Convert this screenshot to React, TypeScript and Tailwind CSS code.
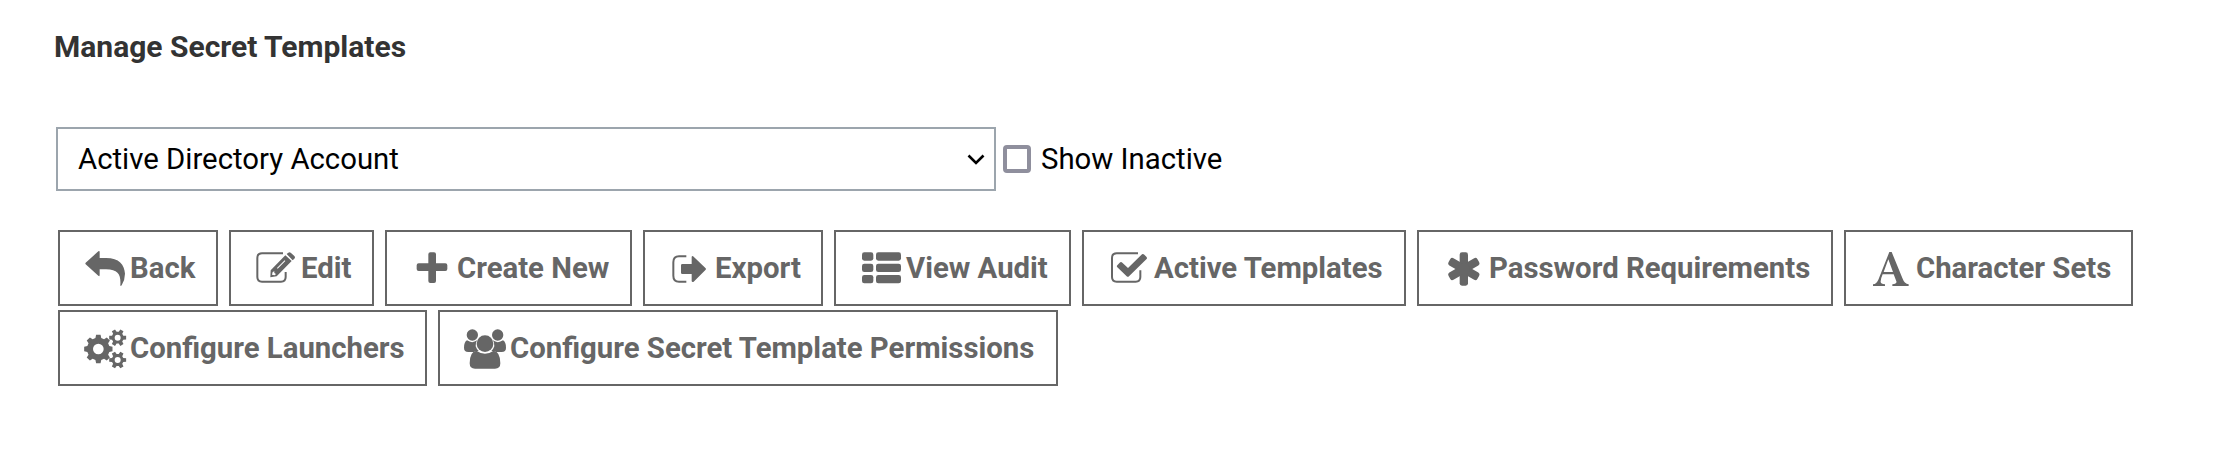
import type { ReactNode } from "react";

function gear(cx: number, cy: number, body: number, tip: number, teeth: number) {
  const step = (Math.PI * 2) / teeth;
  const points: string[] = [];
  for (let i = 0; i < teeth; i++) {
    const a = i * step;
    for (const [r, o] of [[body, -0.33], [tip, -0.2], [tip, 0.2], [body, 0.33]]) {
      points.push(`${(cx + r * Math.cos(a + o * step)).toFixed(1)} ${(cy + r * Math.sin(a + o * step)).toFixed(1)}`);
    }
  }
  return `M${points.join("L")}Z`;
}

function ring(cx: number, cy: number, r: number) {
  return `M${cx - r} ${cy}a${r} ${r} 0 1 0 ${2 * r} 0a${r} ${r} 0 1 0 ${-2 * r} 0Z`;
}

function Icon({ children }: { children: ReactNode }) {
  return (
    <svg viewBox="0 0 153 144" className="h-[48px] w-[51px] shrink-0" fill="currentColor" aria-hidden="true">
      {children}
    </svg>
  );
}

const BackIcon = () => (
  <Icon>
    <path d="M23 56L61 22Q65 19 65 25V42H84C124 42 139 62 141 89Q141 107 131 124Q127 128 127 123C129 94 122 76 84 76H65V92Q65 99 61 95L23 61Q21 59 23 56Z" />
  </Icon>
);

const EditIcon = () => (
  <Icon>
    <path d="M102 28H39Q25 28 25 42V99Q25 113 39 113H96Q110 113 110 99V84" fill="none" stroke="currentColor" strokeWidth="6" />
    <path fillRule="evenodd" d="M65 79L109 34L128 51L83 97L64 100ZM71 84L69 92L77 94L81 90L76 87V82ZM84 72L107 49L109 51L86 74Z" />
    <path d="M113 30L118 26Q122 23 126 27L136 36Q140 40 136 44L131 49Z" />
  </Icon>
);

const PlusIcon = () => (
  <Icon>
    <path d="M76 25H87Q93 25 93 31V58H121Q127 58 127 64V75Q127 81 121 81H93V111Q93 117 87 117H76Q70 117 70 111V81H41Q35 81 35 75V64Q35 58 41 58H70V31Q70 25 76 25Z" />
  </Icon>
);

const ExportIcon = () => (
  <Icon>
    <path d="M70 37H48Q31 37 31 55V95Q31 113 48 113H70" fill="none" stroke="currentColor" strokeWidth="6" />
    <path d="M58 60H86V38Q88 34 92 38L128 73Q130 75 128 77L92 113Q88 116 86 112V90H58Q54 90 54 86V64Q54 60 58 60Z" />
  </Icon>
);

const ListIcon = () => (
  <Icon>
    {[25, 59, 93].map((y) => (
      <g key={y}>
        <rect x="24" y={y} width="34" height="25" rx="7" />
        <rect x="66" y={y} width="75" height="25" rx="7" />
      </g>
    ))}
  </Icon>
);

const CheckIcon = () => (
  <Icon>
    <path d="M108 28H44Q30 28 30 42V99Q30 113 44 113H101Q115 113 115 99V79" fill="none" stroke="currentColor" strokeWidth="6" />
    <path d="M46 64L53 56Q57 52 61 56L78 72L120 31Q123 28 127 32L133 38Q137 42 133 46L81 97Q78 100 74 97L46 70Q43 67 46 64Z" />
  </Icon>
);

const AsteriskIcon = () => (
  <Icon>
    {[0, 60, 120].map((angle) => (
      <rect key={angle} x="68" y="25" width="25" height="100" rx="7" transform={`rotate(${angle} 80.5 75)`} />
    ))}
    <circle cx="80.5" cy="75" r="18" />
  </Icon>
);

const LetterIcon = () => (
  <Icon>
    <path fillRule="evenodd" d="M76 24H83L115 102Q121 119 134 121V126H85V121Q100 119 97 112L89 91H56Q51 102 50 112Q49 119 63 121V126H27V121Q38 119 43 107ZM73 46L59 84H87Z" />
  </Icon>
);

const GearsIcon = () => (
  <Icon>
    <path fillRule="evenodd" d={gear(61, 75, 34, 43, 8) + ring(61, 75, 16)} />
    <path fillRule="evenodd" d={gear(119, 41, 18, 26, 6) + ring(119, 41, 9)} />
    <path fillRule="evenodd" d={gear(119, 108, 18, 26, 6) + ring(119, 108, 9)} />
  </Icon>
);

const PeopleIcon = () => (
  <Icon>
    <circle cx="43" cy="33" r="17" />
    <circle cx="119" cy="33" r="17" />
    <path d="M27 49Q43 60 57 49Q52 59 53 67Q56 76 62 81Q54 81 47 84H31Q18 84 18 71Q18 54 27 49Z" />
    <path d="M135 49Q119 60 105 49Q110 59 109 67Q106 76 100 81Q108 81 115 84H131Q144 84 144 71Q144 54 135 49Z" />
    <circle cx="81" cy="59" r="25" />
    <path d="M55 80Q81 98 107 80Q127 83 127 118Q127 134 111 134H51Q35 134 35 118Q35 83 55 80Z" />
  </Icon>
);

const rows = [
  [
    { label: "Back", icon: <BackIcon />, width: "w-[160px]" },
    { label: "Edit", icon: <EditIcon />, width: "w-[145px]" },
    { label: "Create New", icon: <PlusIcon />, width: "w-[247px]" },
    { label: "Export", icon: <ExportIcon />, width: "w-[180px]" },
    { label: "View Audit", icon: <ListIcon />, width: "w-[237px]" },
    { label: "Active Templates", icon: <CheckIcon />, width: "w-[324px]" },
    { label: "Password Requirements", icon: <AsteriskIcon />, width: "w-[416px]" },
    { label: "Character Sets", icon: <LetterIcon />, width: "w-[289px]" },
  ],
  [
    { label: "Configure Launchers", icon: <GearsIcon />, width: "w-[369px]" },
    { label: "Configure Secret Template Permissions", icon: <PeopleIcon />, width: "w-[620px]" },
  ],
];

export default function App() {
  return (
    <main className="h-[452px] w-[2226px] bg-white pl-[54px] pt-[24px] font-[Roboto,sans-serif] text-[29.33px] leading-[46px] text-black">
      <h1 className="text-[30px] leading-[46px] font-bold text-[#333333]">Manage Secret Templates</h1>
      <div className="mt-[57px] flex h-[64px] items-center pl-[2px]">
        <button className="flex h-[64px] w-[940px] items-center justify-between border-2 border-[#9ca5ad] pl-[20px] pr-[8px]">
          <span>Active Directory Account</span>
          <svg viewBox="0 0 20 12" className="mt-[1px] h-[12px] w-[20px]" fill="none" stroke="currentColor" strokeWidth="2.6" aria-hidden="true">
            <path d="M2.5 1.5L10 9L17.5 1.5" />
          </svg>
        </button>
        <label className="flex items-center">
          <span className="ml-[7px] size-[28px] rounded-[4px] border-4 border-[#8f8f9d]" />
          <span className="ml-[10px]">Show Inactive</span>
        </label>
      </div>
      <nav className="mt-[39px] flex flex-col gap-[4px] pl-[4px] font-bold text-[#666666]">
        {rows.map((row, index) => (
          <div key={index} className="flex gap-[11px]">
            {row.map(({ label, icon, width }) => (
              <button key={label} className={`${width} flex h-[76px] items-center whitespace-nowrap border-2 border-[#666666] pl-[18px]`}>
                {icon}
                <span className="ml-[1px]">{label}</span>
              </button>
            ))}
          </div>
        ))}
      </nav>
    </main>
  );
}
